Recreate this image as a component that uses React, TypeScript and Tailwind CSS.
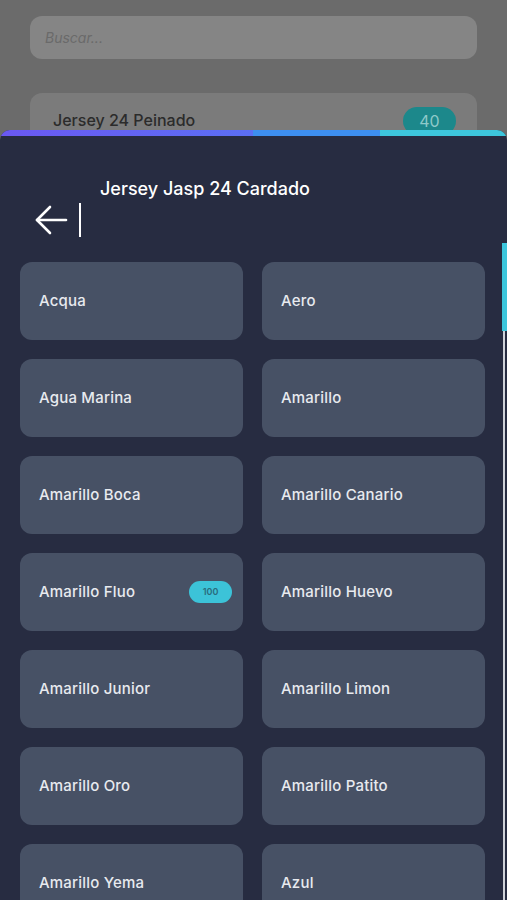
const colors: { name: string; count?: number }[] = [
  { name: 'Acqua' },
  { name: 'Aero' },
  { name: 'Agua Marina' },
  { name: 'Amarillo' },
  { name: 'Amarillo Boca' },
  { name: 'Amarillo Canario' },
  { name: 'Amarillo Fluo', count: 100 },
  { name: 'Amarillo Huevo' },
  { name: 'Amarillo Junior' },
  { name: 'Amarillo Limon' },
  { name: 'Amarillo Oro' },
  { name: 'Amarillo Patito' },
  { name: 'Amarillo Yema' },
  { name: 'Azul' },
  { name: 'Azul Francia' },
  { name: 'Azul Marino' },
]

function BackArrow() {
  return (
    <svg width="34" height="32" viewBox="0 0 34 32" fill="none" stroke="white" strokeWidth="2.6" strokeLinecap="round" strokeLinejoin="round">
      <path d="M32 16H3" />
      <path d="M16 3L3 16L16 29" />
    </svg>
  )
}

function ColorCard({ name, count }: { name: string; count?: number }) {
  return (
    <div className="flex h-[78px] items-center justify-between rounded-xl bg-[#475165] pl-[19px] pr-[11px]">
      <span className="text-[15px] font-medium tracking-[0.2px] text-[#e8eaef]">{name}</span>
      {count !== undefined && (
        <span className="flex h-[22px] w-[43px] items-center justify-center rounded-full bg-[#3cc3d8] text-[9px] font-semibold text-[#2a6b7c]">
          {count}
        </span>
      )}
    </div>
  )
}

export default function App() {
  return (
    <div
      className="relative h-[900px] w-full overflow-hidden bg-[#6b6b6b]"
      style={{ fontFamily: 'Inter, "Noto Sans", sans-serif' }}>
      {/* Page behind the sheet */}
      <div className="flex flex-col px-[30px] pt-4">
        <div className="flex h-[43px] items-center rounded-xl bg-[#858585] px-[15px]">
          <span className="text-[14px] italic text-[#6a6a6a]">Buscar...</span>
        </div>
        <div className="mt-[34px] flex h-[70px] items-start justify-between rounded-xl bg-[#7b7b7b] pl-[23px] pr-[21px] pt-[15px]">
          <span className="text-[16px] font-medium text-[#2b2b2b]">Jersey 24 Peinado</span>
          <span className="-mt-px flex h-[28px] w-[53px] items-center justify-center rounded-full bg-[#1c888b] text-[16px] text-[#8ec9c9]">
            40
          </span>
        </div>
      </div>

      {/* Bottom sheet */}
      <div className="absolute inset-x-0 bottom-0 top-[130px] flex flex-col overflow-hidden rounded-t-[10px] bg-[#272c41]">
        <div className="flex h-[6px] shrink-0">
          <div className="w-[253px] bg-gradient-to-r from-[#6a58f2] to-[#5b6ff4]" />
          <div className="w-[127px] bg-[#3d8ff0]" />
          <div className="flex-1 bg-[#3dc6dc]" />
        </div>

        {/* Header */}
        <div className="relative h-[107px] shrink-0">
          <h1 className="absolute left-[100px] top-[39px] text-[18px] font-medium text-white">
            Jersey Jasp 24 Cardado
          </h1>
          <div className="absolute left-[34px] top-[67px] flex items-center gap-[11px]">
            <BackArrow />
            <div className="h-[34px] w-[2px] bg-white" />
          </div>
        </div>

        {/* List + scrollbar */}
        <div className="flex min-h-0 flex-1">
          <div className="flex-1 overflow-hidden pl-5 pr-[17px] pt-[19px]">
            <div className="grid grid-cols-2 gap-x-[19px] gap-y-[19px]">
              {colors.map((c) => (
                <ColorCard key={c.name} name={c.name} count={c.count} />
              ))}
            </div>
          </div>
          <div className="flex w-[5px] shrink-0 flex-col">
            <div className="h-[88px] bg-[#3cc6dc]" />
            <div className="ml-[1px] w-[2px] flex-1 bg-[#cfd2d8]" />
          </div>
        </div>
      </div>
    </div>
  )
}
